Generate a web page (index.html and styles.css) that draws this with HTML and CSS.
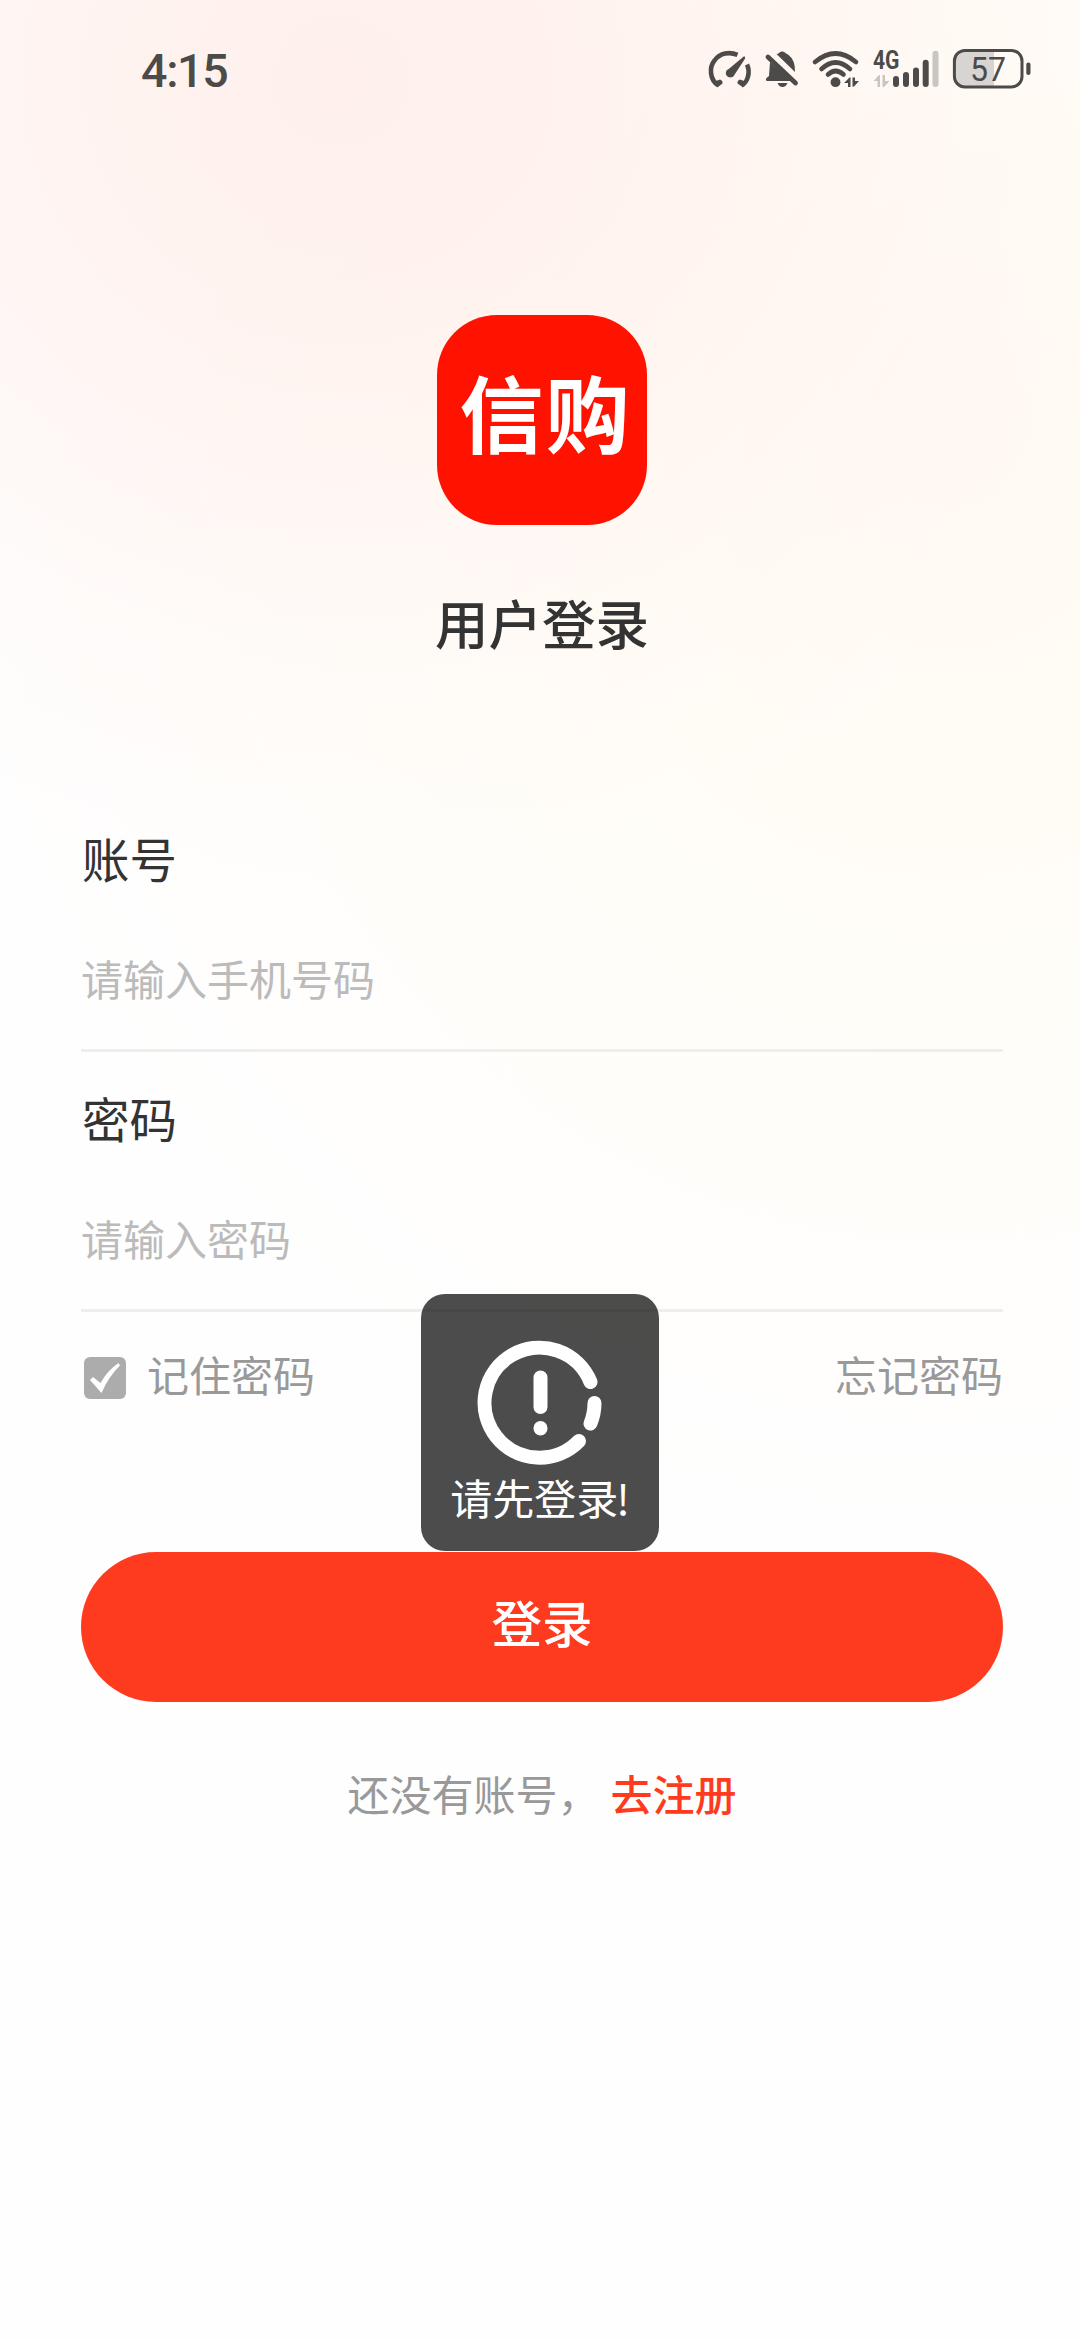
FILE: index.html
```html
<!DOCTYPE html>
<html lang="zh-CN">
<head>
<meta charset="utf-8">
<title>用户登录</title>
<link rel="stylesheet" href="styles.css">
</head>
<body>
<div class="page">
  <header class="status">
    <span class="time">4:15</span>
    <div class="status-icons">
      <svg width="52" height="48" viewBox="706 44 52 48">
        <g fill="none" stroke="#4d4b4a" stroke-width="4.6">
          <path d="M717.500 85.500C708.500 80 708 67 713.500 60.500C719 53 728.500 51.500 736.500 54.800"/>
          <path d="M746 64.500C749.500 72 747 82 740.500 85.500"/>
        </g>
        <path fill="#4d4b4a" d="M712.500 82L719 79.500Q722 80.500 721.500 83.500L717 87ZM745.500 82L739 79.500Q736 80.500 736.500 83.500L741.500 87ZM743 56.300Q745 57 743.500 59.500L733 75.500C730 80 722.500 76 725.500 70.500Q727 69.500 728 68.800Z"/>
      </svg>
      <svg width="48" height="48" viewBox="758 44 48 48">
        <path fill="#4d4b4a" d="M769 62L790.500 81H766Q764 80 765.500 78L768 76ZM775.500 54Q778 53.500 778.500 52.500Q781 50.500 784 52.500Q784.500 53.500 787 54.500Q794.500 60 794 72ZM776.500 83H786.500Q785 87 781.500 87T776.500 83Z"/>
        <path stroke="#4d4b4a" stroke-width="4.800" stroke-linecap="round" d="M767 57L794.500 83"/>
      </svg>
      <svg width="62" height="48" viewBox="806 44 62 48">
        <g fill="none" stroke="#4d4b4a" stroke-width="4.600" stroke-linecap="round">
          <path d="M814 62Q834.500 45 855 62"/>
          <path d="M820.500 69Q834.500 56 849 69"/>
          <path d="M827 74.500Q834.500 67.500 842.500 74.500"/>
        </g>
        <circle cx="834.500" cy="82.200" r="4.900" fill="#4d4b4a"/>
        <path fill="#4d4b4a" d="M843 83L848.500 77.500Q849.500 77 849.500 78V87H847V83ZM851.500 77.500H854V81H858L853 86.500Q851.500 87 851.500 86Z"/>
      </svg>
      <svg width="80" height="48" viewBox="868 44 80 48">
        <text class="net" x="872" y="69" textLength="26.500" lengthAdjust="spacingAndGlyphs">4G</text>
        <path fill="#c8c5c3" d="M872.500 81L877.500 75.500Q879 74.500 879 76V87H876.500V81ZM881.500 75H884V81H888.500L883.500 86.500Q881.500 88 881.500 86Z"/>
        <g stroke="#4d4b4a" stroke-width="6" stroke-linecap="round">
          <path d="M895 79V84M905 75V84M915 70.500V84M924.700 62.700V84"/>
          <path stroke="#c8c5c3" d="M934.500 53.700V84"/>
        </g>
      </svg>
      <svg width="86" height="48" viewBox="948 44 86 48">
        <path fill="#d7d4d2" d="M964 50.500H993V87H964Q953.500 87 953.500 76.500V61Q953.500 50.500 964 50.500Z"/>
        <rect x="953.400" y="50.400" width="67.600" height="36.600" rx="10.500" fill="none" stroke="#4d4b4a" stroke-width="3"/>
        <rect x="1025.300" y="62.500" width="4.200" height="12.500" rx="2.100" fill="#4d4b4a"/>
        <text class="level" x="969" y="81" textLength="36" lengthAdjust="spacingAndGlyphs">57</text>
      </svg>
    </div>
  </header>

  <main class="content">
    <div class="logo"><span>信购</span></div>
    <h1 class="title">用户登录</h1>

    <form class="form">
      <div class="field">
        <label class="label">账号</label>
        <div class="placeholder">请输入手机号码</div>
      </div>
      <div class="field">
        <label class="label">密码</label>
        <div class="placeholder">请输入密码</div>
      </div>
      <div class="options">
        <div class="remember">
          <svg width="42" height="42" viewBox="0 0 42 42">
            <rect width="42" height="42" rx="6" fill="#acacac"/>
            <path fill="#fff" d="M6 23L9 20L16.500 26Q24 13 34.500 6L36 8.500Q25 19 17.500 36Z"/>
          </svg>
          <span>记住密码</span>
        </div>
        <span>忘记密码</span>
      </div>
      <div class="submit">登录</div>
    </form>

    <p class="signup"><span>还没有账号，</span><span class="signup-link">去注册</span></p>
  </main>

  <div class="toast">
    <svg width="126" height="126" viewBox="0 0 126 126" fill="none" stroke="#fff" stroke-width="14" stroke-linecap="round">
      <path d="M113.500 42A55 55 0 1 0 102 101"/>
      <path d="M117.500 63A55 55 0 0 1 113.500 83.500"/>
      <path d="M63.500 37.500V67M63.500 88V88.500"/>
    </svg>
    <span>请先登录<span class="mark">!</span></span>
  </div>
</div>
</body>
</html>
```
FILE: styles.css
```css
* {
  box-sizing: border-box;
}

body {
  margin: 0;
}

.page {
  position: relative;
  width: 1080px;
  height: 2340px;
  overflow: hidden;
  background:
    radial-gradient(ellipse 860px 800px at 340px 80px, rgba(255, 235, 231, 0.75) 0%, rgba(255, 238, 234, 0.62) 35%, rgba(255, 244, 241, 0.3) 72%, rgba(255, 255, 255, 0) 100%),
    radial-gradient(ellipse 1000px 1100px at 950px 420px, #fffaf2 0%, #fffdf8 50%, #fefefe 100%);
  color: #333;
  font-family: "Noto Sans CJK SC", sans-serif;
}

.status {
  display: flex;
  justify-content: space-between;
  height: 140px;
  padding: 44px 45px 0 141px;
}

.time {
  height: 46px;
  margin-top: 4px;
  color: #4d4b4a;
  font: 500 46.5px/46px Roboto, sans-serif;
  letter-spacing: -1.3px;
}

.status-icons {
  display: flex;
  height: 48px;
}

.status-icons svg {
  overflow: visible;
}

.net {
  fill: #4d4b4a;
  font: 700 25px Roboto, sans-serif;
}

.level {
  fill: #4d4b4a;
  font: 400 34px Roboto, sans-serif;
}

.content {
  display: flex;
  flex-direction: column;
  align-items: center;
  padding: 175px 77px 0 81px;
}

.logo {
  display: flex;
  justify-content: center;
  width: 210px;
  height: 210px;
  padding-left: 7px;
  border-radius: 60px;
  background: #ff1200;
  color: #fff;
  font-size: 84px;
  font-weight: 700;
  line-height: 192px;
  letter-spacing: 2px;
}

.title {
  margin: 58px 0 0;
  font-size: 53.5px;
  font-weight: 500;
  line-height: 78px;
}

.form {
  width: 100%;
  margin-top: 131px;
}

.field {
  height: 260px;
  border-bottom: 3px solid #eee;
}

.label {
  display: block;
  height: 134px;
  padding-left: 1px;
  font-size: 47.5px;
  line-height: 132px;
}

.placeholder {
  color: #bbb;
  font-size: 42px;
  line-height: 103px;
}

.options {
  display: flex;
  justify-content: space-between;
  height: 240px;
  padding-left: 3px;
  color: #999;
  font-size: 42px;
  line-height: 123px;
}

.remember {
  display: flex;
  gap: 21px;
}

.remember svg {
  margin-top: 45px;
}

.submit {
  height: 150px;
  border-radius: 75px;
  background: #ff3b1f;
  color: #fff;
  font-size: 50.5px;
  font-weight: 500;
  line-height: 138px;
  text-align: center;
}

.signup {
  display: flex;
  gap: 11px;
  margin: 59px 0 0;
  color: #999;
  font-size: 42px;
  line-height: 64px;
}

.signup-link {
  color: #ff3b1f;
  font-weight: 500;
}

.toast {
  position: absolute;
  left: 421px;
  top: 1294px;
  display: flex;
  flex-direction: column;
  align-items: center;
  width: 238px;
  height: 257px;
  padding-top: 46px;
  border-radius: 24px;
  background: rgba(0, 0, 0, 0.7);
  color: #fff;
  font-size: 42px;
  line-height: 62px;
}

.mark {
  margin-left: -2px;
}
```
